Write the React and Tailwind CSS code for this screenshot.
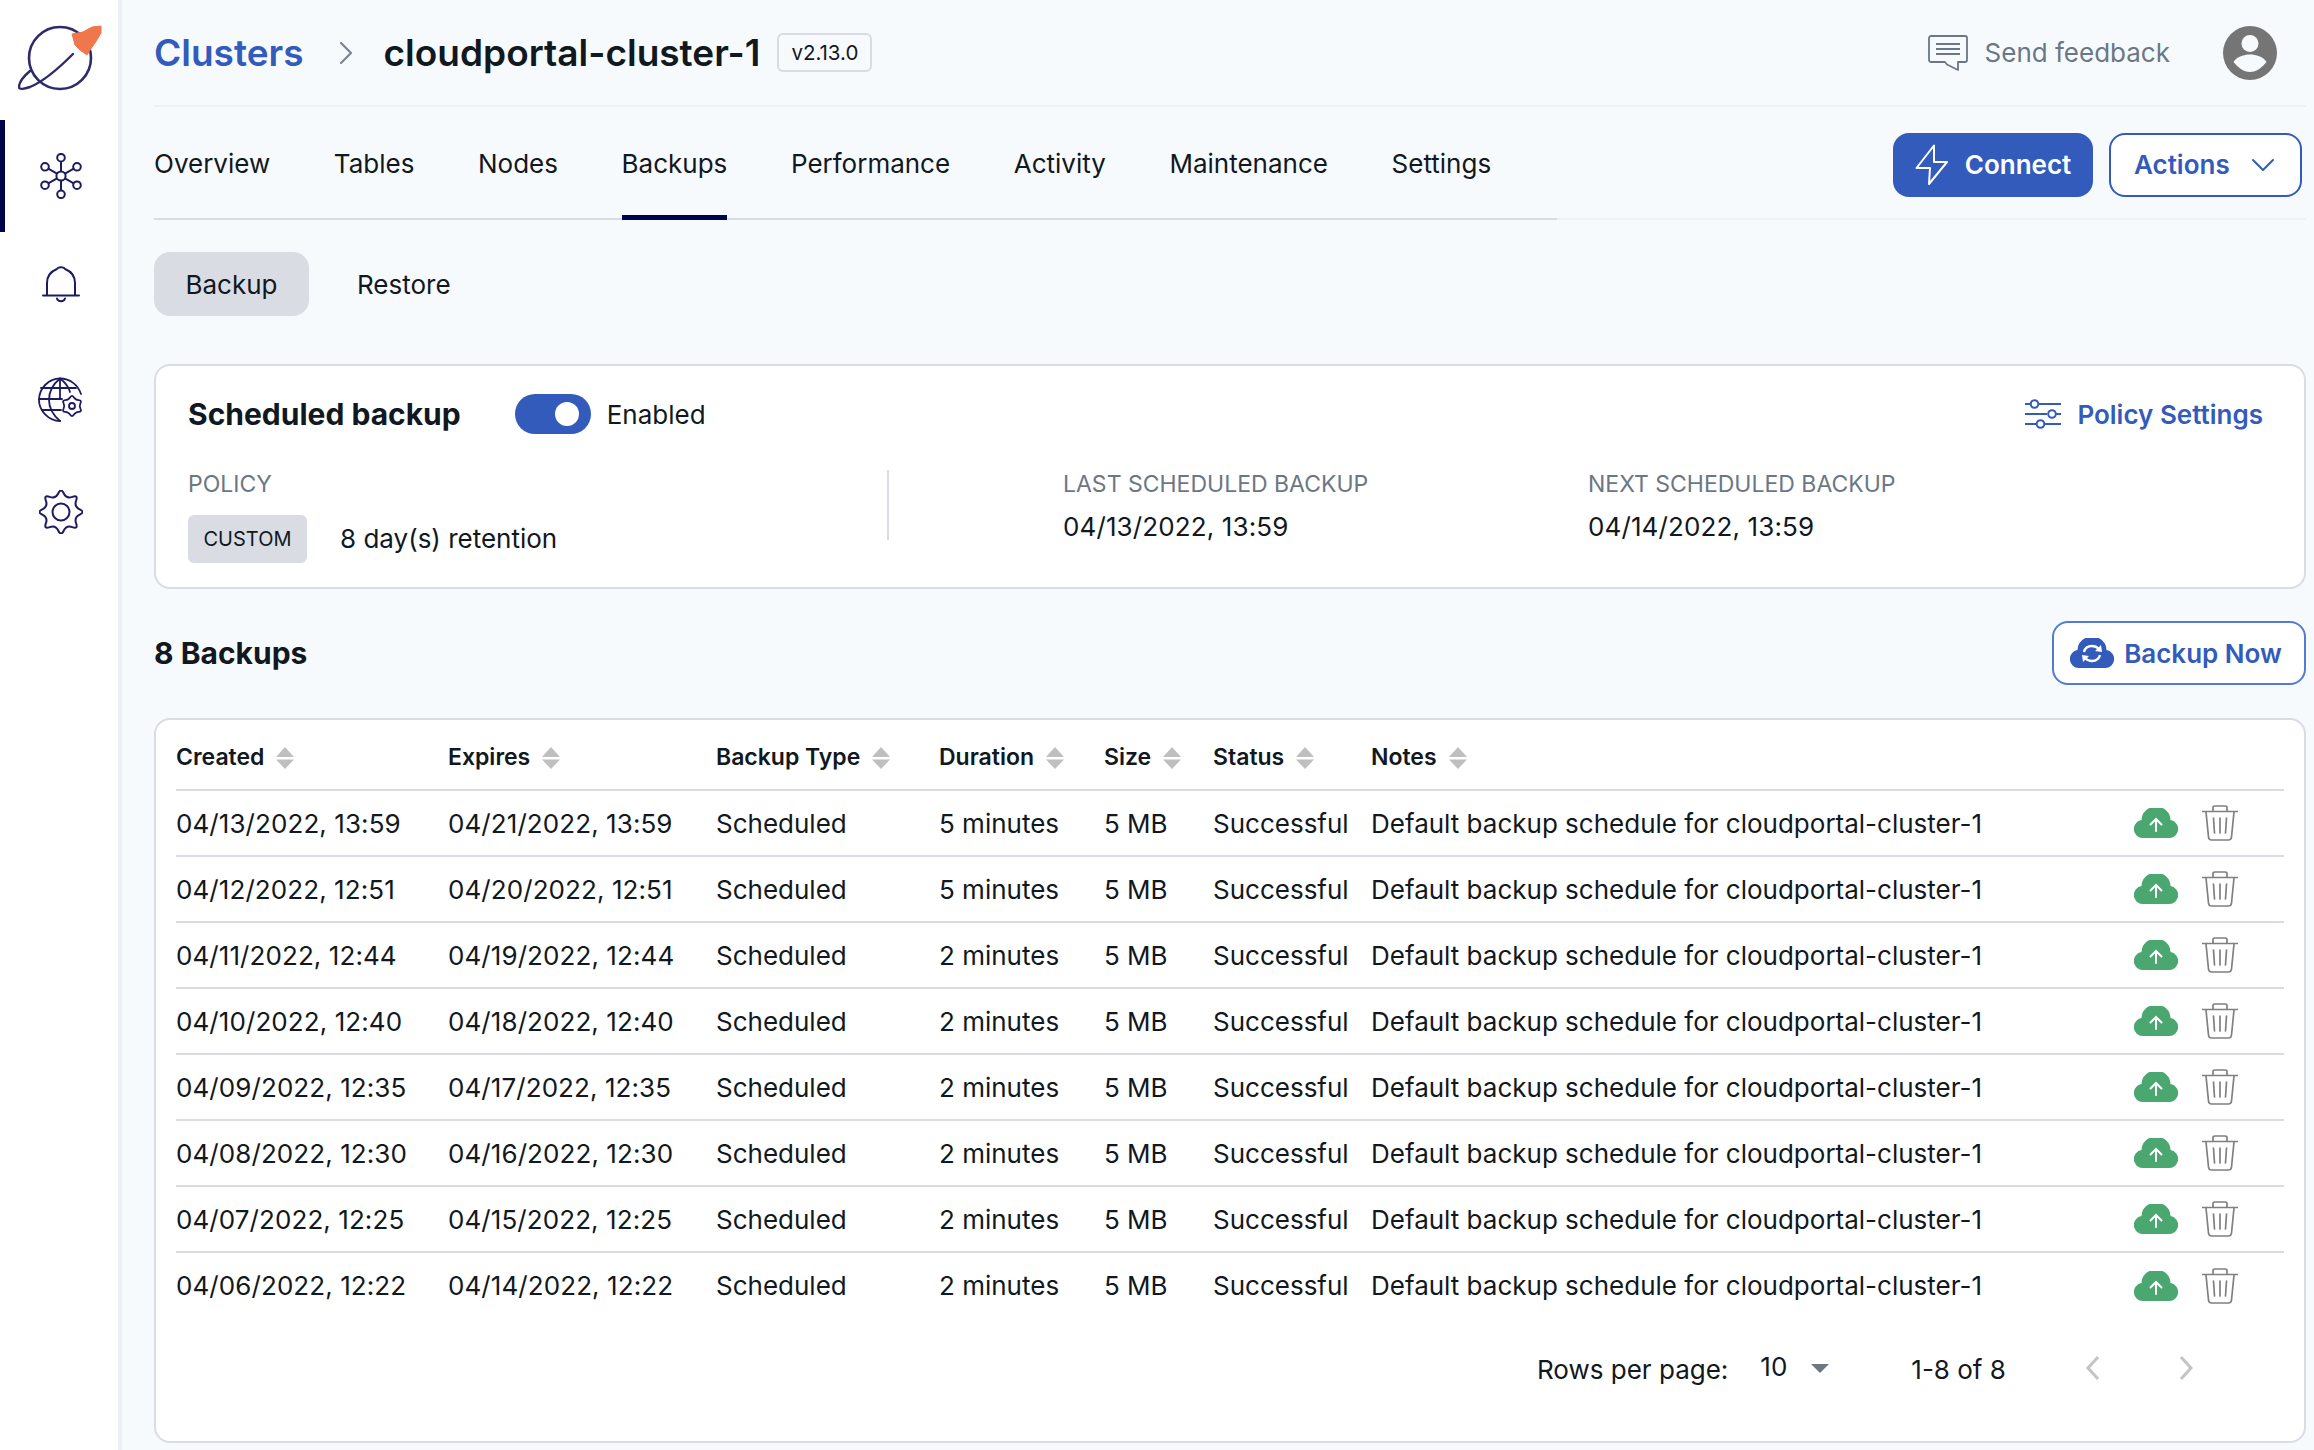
import { ChevronRight, ChevronDown } from 'lucide-react'

const BLUE = '#335bbb'
const CLOUD = 'M9 30A9 9 0 0 1 7.500 12.100A14.500 13.500 0 0 1 36.500 12.100A9 9 0 0 1 35 30Z'
const rows = [
  ['04/13/2022, 13:59', '04/21/2022, 13:59', '5 minutes'],
  ['04/12/2022, 12:51', '04/20/2022, 12:51', '5 minutes'],
  ['04/11/2022, 12:44', '04/19/2022, 12:44', '2 minutes'],
  ['04/10/2022, 12:40', '04/18/2022, 12:40', '2 minutes'],
  ['04/09/2022, 12:35', '04/17/2022, 12:35', '2 minutes'],
  ['04/08/2022, 12:30', '04/16/2022, 12:30', '2 minutes'],
  ['04/07/2022, 12:25', '04/15/2022, 12:25', '2 minutes'],
  ['04/06/2022, 12:22', '04/14/2022, 12:22', '2 minutes'],
]
const tabs = ['Overview', 'Tables', 'Nodes', 'Backups', 'Performance', 'Activity', 'Maintenance', 'Settings']
const cols = ['Created', 'Expires', 'Backup Type', 'Duration', 'Size', 'Status', 'Notes']

// wavy outline for the gear icons, quadratic through the midpoints
const gearPath = (cx, cy, R, r, n) => {
  const pts = []
  for (let i = 0; i < n * 2; i++) {
    const a = (Math.PI * i) / n - Math.PI / 2
    const d = i % 2 ? r : R
    pts.push([cx + d * Math.cos(a), cy + d * Math.sin(a)])
  }
  const mid = (a, b) => [(a[0] + b[0]) / 2, (a[1] + b[1]) / 2]
  const start = mid(pts[pts.length - 1], pts[0])
  let d = `M${start[0].toFixed(2)} ${start[1].toFixed(2)}`
  pts.forEach((p, i) => {
    const m = mid(p, pts[(i + 1) % pts.length])
    d += `Q${p[0].toFixed(2)} ${p[1].toFixed(2)} ${m[0].toFixed(2)} ${m[1].toFixed(2)}`
  })
  return d + 'Z'
}

function Logo() {
  return (
    <svg width="86" height="68" viewBox="18 24 86 68" fill="none">
      <circle cx="60" cy="58" r="31" stroke="#2f2a6b" strokeWidth="2.600" />
      <path d="M30 71C24 76 19 82 19 87C19 90 24 89 30 87C45 81 62 65 73 54" stroke="#2f2a6b" strokeWidth="2.400" strokeLinecap="round" />
      <path d="M72 34L83 32L92 27L101 26V33L95 43L90 50L87 55L80 50L75 45Z" fill="#f0764c" stroke="#f0764c" strokeLinejoin="round" />
    </svg>
  )
}
function ClusterIcon() {
  const pts = [[21, 4.7], [37, 13.800], [37, 32.200], [21, 41.300], [5, 32.200], [5, 13.800]]
  return (
    <svg width="42" height="46" viewBox="0 0 42 46" fill="none" stroke="#1d1c60" strokeWidth="2">
      <circle cx="21" cy="23" r="4.600" />
      {pts.map(([x, y]) => <circle key={x + '-' + y} cx={x} cy={y} r="3.800" />)}
      <path d="M21 8.500V18.400M21 27.600V37.500M33.700 15.700L25 20.700M8.300 15.700L17 20.700M33.700 30.300L25 25.300M8.300 30.300L17 25.300" />
    </svg>
  )
}
function BellIcon() {
  return (
    <svg width="38" height="38" viewBox="0 0 38 38" fill="none" stroke="#1d1c60" strokeWidth="2" strokeLinecap="round" strokeLinejoin="round">
      <path d="M5 30V18C5 10 10 6 15 4C16 1.500 22 1.500 23 4C28 6 33 10 33 18V30" />
      <path d="M1 30.500H37" />
      <path d="M15 33.500C16 37 22 37 23 33.500" />
    </svg>
  )
}
function GlobeGearIcon() {
  return (
    <svg width="46" height="46" viewBox="0 0 46 46" fill="none" stroke="#1d1c60" strokeWidth="1.800" strokeLinecap="round">
      <path d="M43 17C40 8 32 1.500 22 1.500C11 1.500 1 11 1 23C1 34 11 44 22 44" />
      <path d="M22 1.500C14 8 11 15 11 23C11 31 15 38 22 44M22 1.500C28 6 31 11 32 15M22 1.500V22M3 11H38M1 22H24M4 33H23" />
      <path d={gearPath(34, 29, 11.500, 7, 6)} fill="#fff" strokeLinejoin="round" />
      <circle cx="34" cy="29" r="3" />
    </svg>
  )
}
function GearIcon() {
  return (
    <svg width="44" height="44" viewBox="0 0 44 44" fill="none" stroke="#1d1c60" strokeWidth="2" strokeLinejoin="round">
      <path d={gearPath(22, 22, 24.500, 14, 8)} />
      <circle cx="22" cy="22" r="8.500" />
    </svg>
  )
}
function FeedbackIcon() {
  return (
    <svg width="40" height="36" viewBox="0 0 40 36" fill="none" stroke="#6b7785" strokeWidth="1.800" strokeLinejoin="round">
      <path d="M3 1H37C38 1 39 2 39 3V25C39 26 38 27 37 27H30V35L19 29.500L17 27H3C2 27 1 26 1 25V3C1 2 2 1 3 1Z" />
      <path d="M8 9H32M8 14H32M8 19H32" />
    </svg>
  )
}
function Avatar() {
  return (
    <svg width="54" height="54" viewBox="0 0 54 54">
      <circle cx="27" cy="27" r="27" fill="#757575" />
      <circle cx="27" cy="17.500" r="8.500" fill="#f7fafd" />
      <path d="M10.500 36C14 30.500 21 28.500 27 28.500C33 28.500 40 30.500 43.500 36C39.500 41 33.500 46 27 46C20.500 46 14.500 41 10.500 36Z" fill="#f7fafd" />
    </svg>
  )
}
function BoltIcon() {
  return (
    <svg width="34" height="42" viewBox="0 0 34 42" fill="none" stroke="#fff" strokeWidth="2" strokeLinejoin="round">
      <path d="M19 1.500L1.500 24H15L14 40L32 18H19Z" />
    </svg>
  )
}
function SlidersIcon() {
  return (
    <svg width="37" height="30" viewBox="0 0 37 30" fill="none" stroke={BLUE} strokeWidth="2">
      <path d="M0 5H5M14 5H36M0 15H22M31 15H36M0 25H11M20 25H36" />
      <circle cx="9.500" cy="5" r="3.800" />
      <circle cx="27" cy="15" r="3.800" />
      <circle cx="15.500" cy="25" r="3.800" />
    </svg>
  )
}
function CloudSyncIcon() {
  return (
    <svg width="44" height="30" viewBox="0 0 44 30">
      <path d={CLOUD} fill={BLUE} />
      <path d="M14 14C15 10 18 8 22 8C25 8 27 9 29 11M30 17C29 21 26 23 22 23C19 23 17 22 15 20" fill="none" stroke="#fff" strokeWidth="2.400" />
      <path d="M25 13L32 14L31 7ZM19 18L12 17L13 24Z" fill="#fff" />
    </svg>
  )
}
function CloudUpIcon() {
  return (
    <svg width="44" height="30" viewBox="0 0 44 30">
      <path d={CLOUD} fill="#4aa76f" />
      <path d="M22 23V11M16.500 16.500L22 11L27.500 16.500" fill="none" stroke="#fff" strokeWidth="2" strokeLinecap="round" />
    </svg>
  )
}
function TrashIcon() {
  return (
    <svg width="36" height="36" viewBox="0 0 36 36" fill="none" stroke="#808080" strokeWidth="1.700" strokeLinecap="round">
      <path d="M0 6.500H36" />
      <path d="M11 6V2.500C11 1.500 12 1 13 1H23C24 1 25 1.500 25 2.500V6" />
      <path d="M4 7L6.500 32C6.700 34 8 35 9.500 35H26.500C28 35 29.300 34 29.500 32L32 7" />
      <path d="M11.500 13L12.500 28M18 13V28M24.500 13L23.500 28" />
    </svg>
  )
}
function SortIcon() {
  return (
    <svg width="18" height="22" viewBox="0 0 18 22" fill="#bfbfbf">
      <path d="M9 0L18 10H0ZM9 22L0 12.500H18Z" />
    </svg>
  )
}
function PageArrow({ d, className }) {
  return (
    <svg className={className} width="16" height="24" viewBox="0 0 16 24" fill="none" stroke="#c4c4c4" strokeWidth="3">
      <path d={d} />
    </svg>
  )
}

export default function App() {
  return (
    <div className="flex min-h-[1450px] bg-[#f7fafd] text-[26px] text-[#111820] font-['Inter',sans-serif]">
      <aside className="flex w-[122px] shrink-0 flex-col border-r-4 border-[#edf0f4] bg-white">
        <div className="h-[120px] pl-[18px] pt-[24px]"><Logo /></div>
        <div className="relative flex h-[112px] items-center justify-center pl-[4px]">
          <span className="absolute left-0 top-0 h-full w-[5px] bg-[#00044a]" />
          <ClusterIcon />
        </div>
        <div className="flex flex-col items-center pl-[4px] pt-[33px]">
          <BellIcon />
          <div className="mt-[74px]"><GlobeGearIcon /></div>
          <div className="mt-[67px]"><GearIcon /></div>
        </div>
      </aside>

      <main className="flex min-w-0 flex-1 flex-col pl-[32px] pr-[8px]">
        <header className="flex h-[107px] shrink-0 items-center border-b-2 border-[#edf0f4] pr-[29px]">
          <span className="text-[37px] leading-none font-semibold text-[#335bbb]">Clusters</span>
          <ChevronRight className="ml-[22px] mr-[18px] text-[#7b8591]" size={40} strokeWidth={1.300} />
          <span className="text-[37px] leading-none font-semibold">cloudportal-cluster-1</span>
          <span className="ml-[17px] rounded-[6px] border-2 border-[#d8dce2] px-[12px] py-[5px] text-[20.500px] leading-[25px]">v2.13.0</span>
          <div className="ml-auto flex items-center gap-[17px] text-[26px] text-[#6b7785]">
            <FeedbackIcon />
            <span>Send feedback</span>
          </div>
          <span className="ml-[53px] block"><Avatar /></span>
        </header>

        <div className="flex h-[113px] shrink-0 items-stretch border-b-2 border-[#edf0f4]">
          <nav className="-mb-[2px] flex w-[1403px] shrink-0 gap-[63.600px] border-b-2 border-[#d9dde3]">
            {tabs.map((t) => (
              <span key={t} className="relative flex items-center pt-[2px]">
                {t}
                {t === 'Backups' && <span className="absolute inset-x-0 bottom-[-2px] h-[5px] bg-[#00044a]" />}
              </span>
            ))}
          </nav>
          <div className="ml-auto flex items-center gap-[16px] pr-[4px] pt-[4px]">
            <button className="flex h-[64px] w-[200px] items-center justify-center gap-[16px] rounded-[16px] bg-[#335bbb] font-semibold text-white"><BoltIcon />Connect</button>
            <button className="flex h-[64px] w-[193px] items-center gap-[13px] rounded-[16px] border-2 border-[#335bbb] bg-white pl-[23px] font-semibold text-[#335bbb]">Actions<ChevronDown size={40} strokeWidth={1.200} /></button>
          </div>
        </div>

        <div className="mt-[32px] flex items-center gap-[48px]">
          <span className="flex h-[64px] w-[155px] items-center justify-center rounded-[16px] bg-[#d9dde3]">Backup</span>
          <span>Restore</span>
        </div>

        <section className="mt-[48px] h-[225px] rounded-[16px] border-2 border-[#d9dde3] bg-white pl-[32px] pr-[41px] pt-[28px]">
          <div className="flex h-[40px] items-center">
            <h2 className="text-[30px] font-bold">Scheduled backup</h2>
            <span className="ml-[54px] flex h-[40px] w-[76px] items-center justify-end rounded-full bg-[#335bbb] pr-[12px]">
              <span className="h-[24px] w-[24px] rounded-full bg-white" />
            </span>
            <span className="ml-[16px]">Enabled</span>
            <span className="ml-auto flex items-center gap-[15px] font-semibold text-[#335bbb]"><SlidersIcon />Policy Settings</span>
          </div>
          <div className="mt-[36px] flex">
            <div className="flex h-[70px] w-[701px] flex-col border-r-2 border-[#d9dde3] pt-[2px]">
              <span className="text-[23px] leading-[24px] text-[#6b7785]">POLICY</span>
              <div className="mt-[19px] flex items-center gap-[33px]">
                <span className="flex h-[48px] w-[119px] items-center justify-center rounded-[6px] bg-[#d9dde3] text-[20px]">CUSTOM</span>
                <span className="-translate-y-[1px]">8 day(s) retention</span>
              </div>
            </div>
            <div className="ml-[174px] w-[525px] pt-[2px]">
              <div className="text-[23px] leading-[24px] text-[#6b7785]">LAST SCHEDULED BACKUP</div>
              <div className="mt-[10.500px] tracking-[0.120px]">04/13/2022, 13:59</div>
            </div>
            <div className="pt-[2px]">
              <div className="text-[23px] leading-[24px] text-[#6b7785]">NEXT SCHEDULED BACKUP</div>
              <div className="mt-[10.500px] tracking-[0.120px]">04/14/2022, 13:59</div>
            </div>
          </div>
        </section>

        <div className="mt-[32px] flex h-[64px] items-center justify-between">
          <h2 className="text-[30px] font-bold">8 Backups</h2>
          <button className="flex h-[64px] w-[254px] items-center justify-center gap-[10px] rounded-[16px] border-2 border-[#527bd3] bg-white pr-[6px] font-semibold text-[#335bbb]"><CloudSyncIcon />Backup Now</button>
        </div>

        <section className="mb-[7px] mt-[33px] rounded-[16px] border-2 border-[#d9dde3] bg-white pl-[20px] pr-[20px]">
          <table className="w-full table-fixed border-collapse">
            <colgroup>
              <col className="w-[272px]" /><col className="w-[268px]" /><col className="w-[223px]" /><col className="w-[165px]" /><col className="w-[109px]" /><col className="w-[158px]" /><col className="w-[763px]" /><col />
            </colgroup>
            <thead>
              <tr className="h-[70px] border-b-2 border-[#d9dde3]">
                {cols.map((c) => (
                  <th key={c} className="pt-[6px] text-left text-[23px] font-semibold">
                    <span className="flex items-center gap-[12px]">{c}<SortIcon /></span>
                  </th>
                ))}
                <th />
              </tr>
            </thead>
            <tbody>
              {rows.map((r) => (
                <tr key={r[0]} className="h-[66px] border-b-2 border-[#d9dde3] last:border-b-0">
                  <td className="tracking-[0.080px]">{r[0]}</td>
                  <td className="tracking-[0.080px]">{r[1]}</td>
                  <td>Scheduled</td>
                  <td>{r[2]}</td>
                  <td>5 MB</td>
                  <td>Successful</td>
                  <td>Default backup schedule for cloudportal-cluster-1</td>
                  <td>
                    <div className="flex items-center justify-end gap-[24px] pr-[46px]"><CloudUpIcon /><TrashIcon /></div>
                  </td>
                </tr>
              ))}
            </tbody>
          </table>
          <div className="flex h-[123px] items-start pl-[1361px] pt-[32px]">
            <span>Rows per page:</span>
            <span className="ml-[32px] -translate-y-[3px]">10</span>
            <span className="ml-[24px] mt-[14px] h-0 w-0 border-x-[9px] border-t-[9px] border-x-transparent border-t-[#6b7785]" />
            <span className="ml-[82px]">1-8 of 8</span>
            <PageArrow className="ml-[79px] mt-[6px]" d="M13 1L3 12L13 23" />
            <PageArrow className="ml-[77px] mt-[6px]" d="M3 1L13 12L3 23" />
          </div>
        </section>
      </main>
    </div>
  )
}
